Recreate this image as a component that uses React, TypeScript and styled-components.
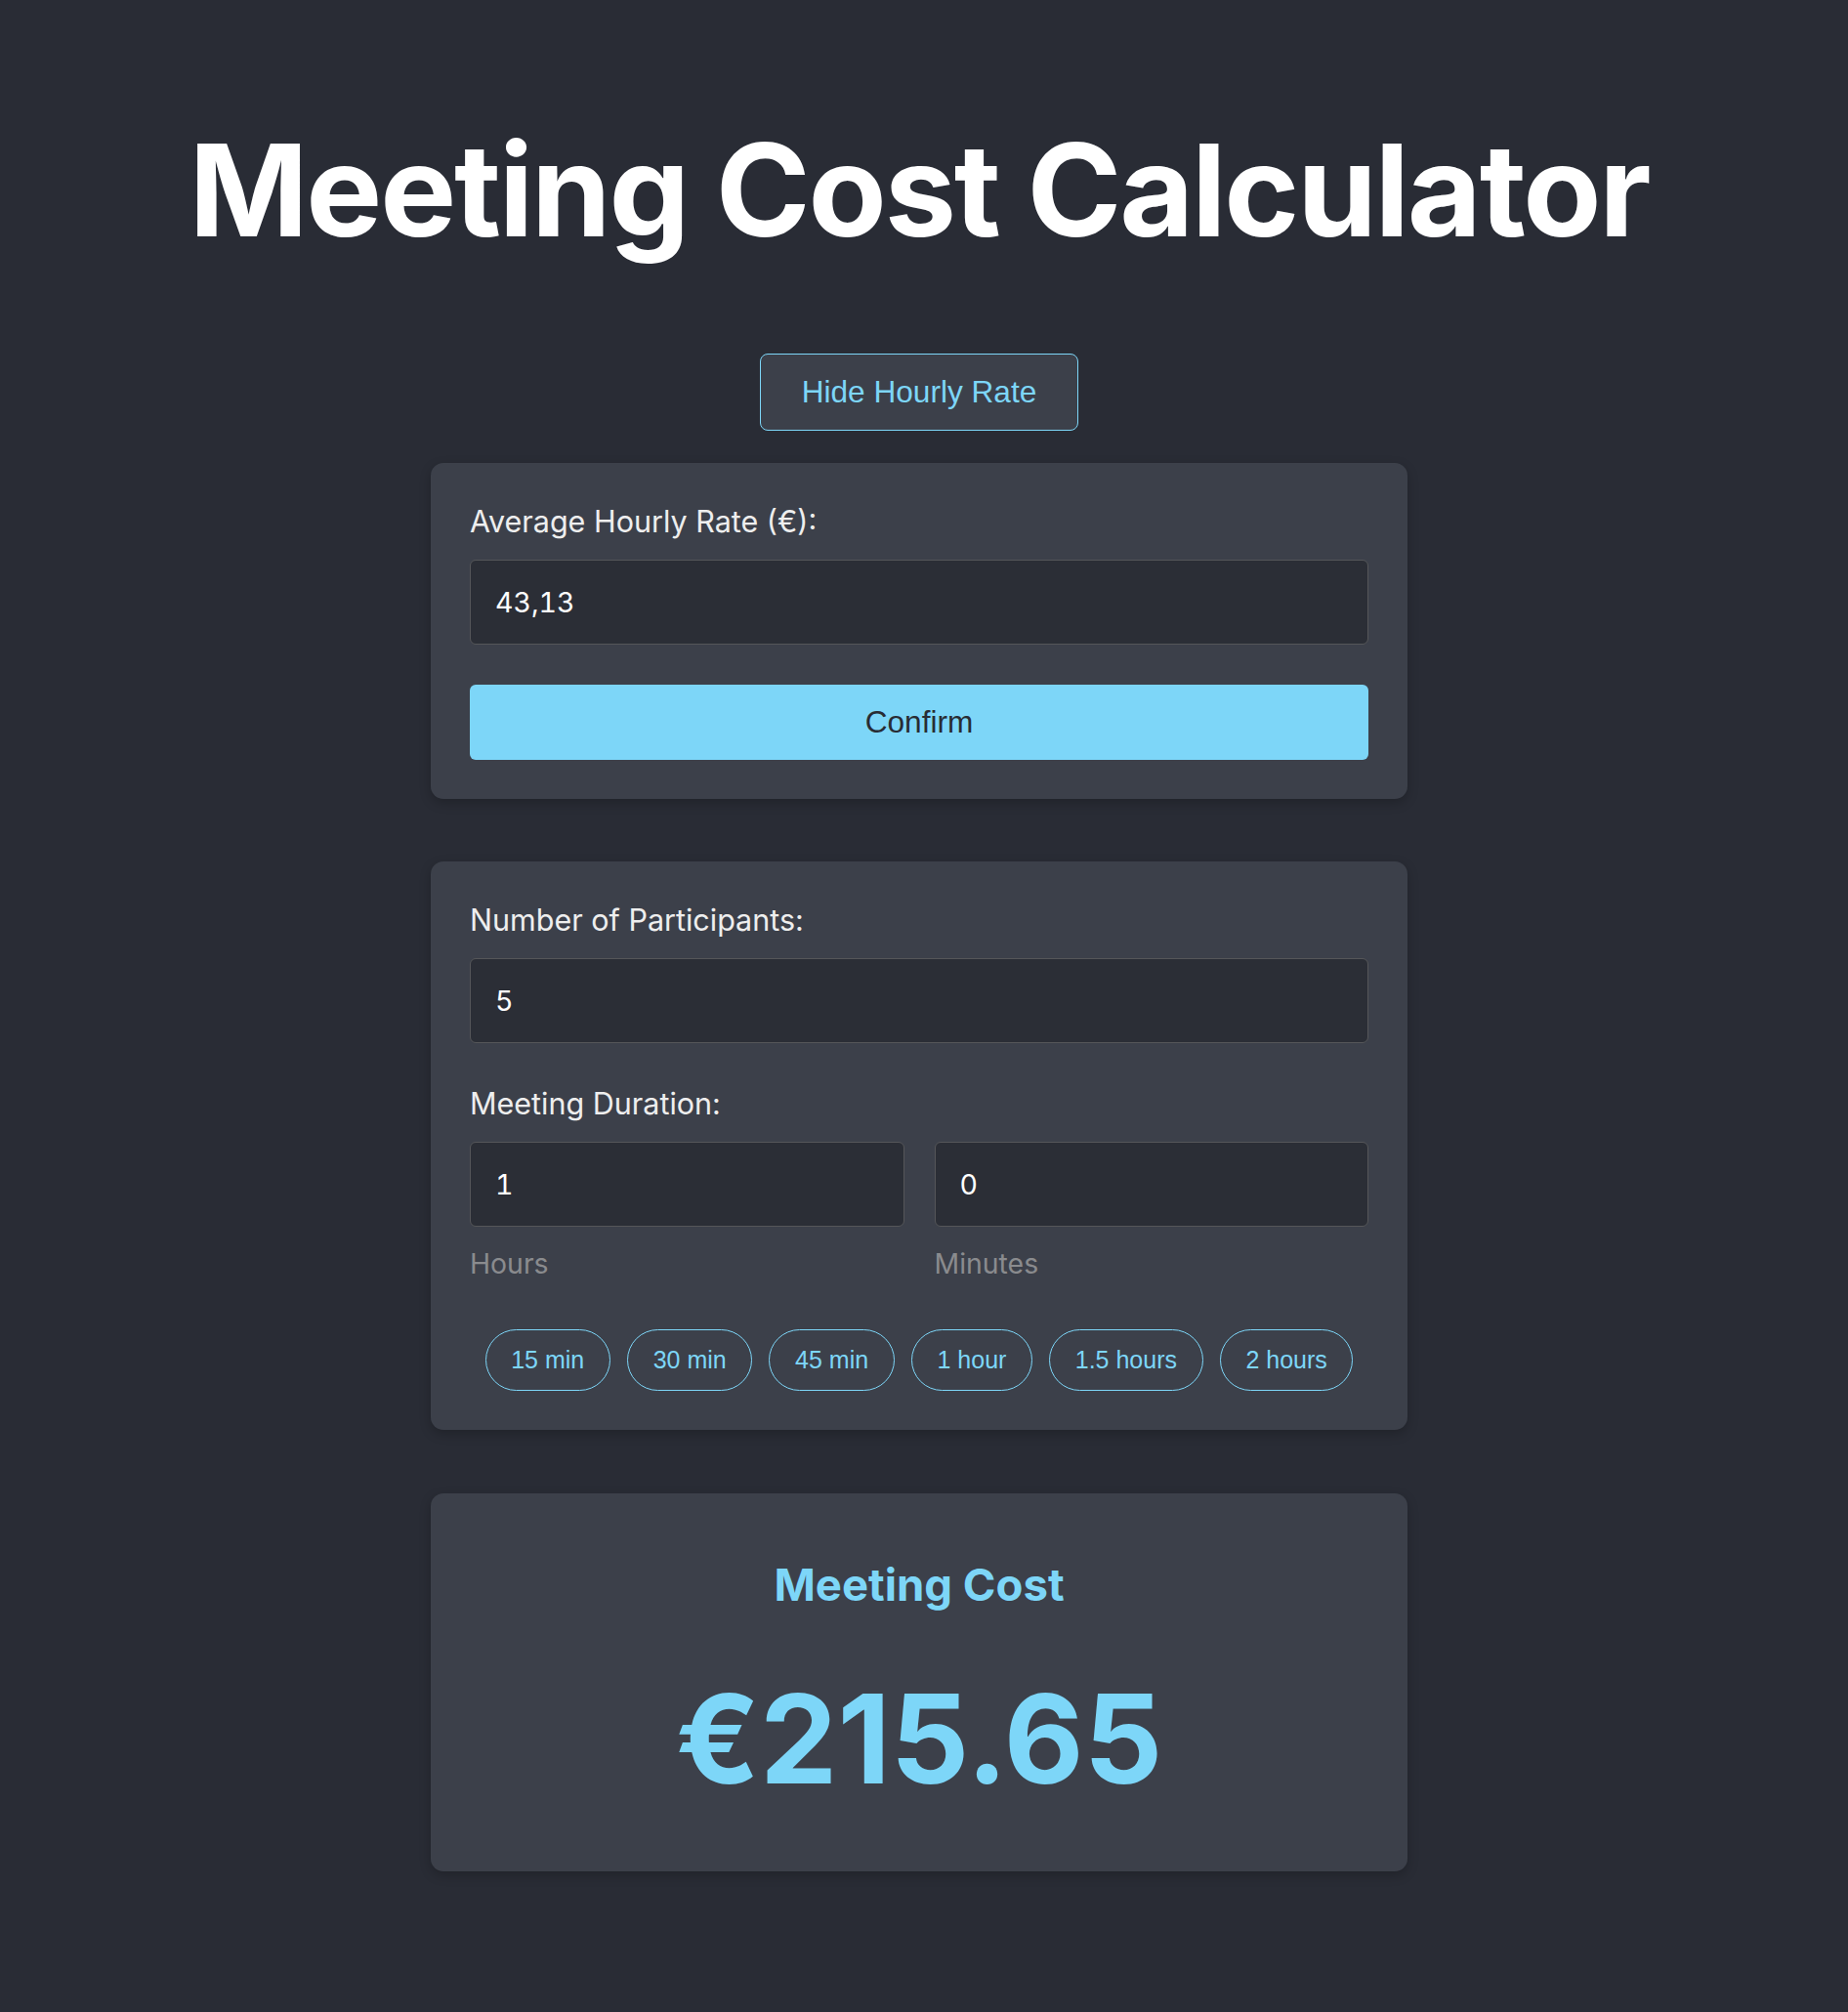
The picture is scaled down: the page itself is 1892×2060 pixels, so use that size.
import React from "react";
import styled, { createGlobalStyle } from "styled-components";

const ACCENT = "#7dd6f8";
const PAGE_BG = "#292c35";
const CARD_BG = "#3c404a";
const FIELD_BG = "#2b2e36";

const GlobalStyle = createGlobalStyle`
  html, body {
    margin: 0;
    padding: 0;
    background: ${PAGE_BG};
  }
  body {
    font-family: Inter, "Noto Sans", sans-serif;
    color: #ececec;
    -webkit-font-smoothing: antialiased;
  }
  * { box-sizing: border-box; }
`;

const Page = styled.main`
  min-height: 2060px;
  display: flex;
  flex-direction: column;
  align-items: center;
  padding: 122px 10px 0 0;
`;

const Title = styled.h1`
  margin: 0;
  font-family: Inter, sans-serif;
  font-weight: 700;
  font-size: 131px;
  line-height: 145px;
  letter-spacing: -2.2px;
  color: #ffffff;
  white-space: nowrap;
`;

const ToggleButton = styled.button`
  margin-top: 95px;
  height: 79px;
  padding: 0 42px;
  background: ${CARD_BG};
  border: 1px solid ${ACCENT};
  border-radius: 8px;
  color: ${ACCENT};
  font-family: "Liberation Sans", Arial, sans-serif;
  font-size: 31.6px;
  cursor: pointer;
`;

const Card = styled.section<{ $gap: number }>`
  width: 1000px;
  margin-top: ${(p) => p.$gap}px;
  padding: 40px;
  background: ${CARD_BG};
  border-radius: 13px;
  box-shadow: 0 4px 12px rgba(0, 0, 0, 0.22);
`;

const ResultCard = styled(Card)`
  text-align: center;
`;

const FieldGroup = styled.div<{ $last?: boolean }>`
  display: flex;
  flex-direction: column;
  margin-bottom: ${(p) => (p.$last ? 0 : 42)}px;
`;

const Label = styled.label`
  display: block;
  font-family: Inter, sans-serif;
  font-size: 30.5px;
  line-height: 40px;
  color: #eeeeee;
  margin-bottom: 19px;
`;

const Field = styled.input`
  width: 100%;
  height: 87px;
  padding: 0 25px;
  background: ${FIELD_BG};
  border: 1px solid #555659;
  border-radius: 6px;
  color: #ffffff;
  font-family: Inter, sans-serif;
  font-size: 28.5px;
  font-variant-numeric: tabular-nums;
  outline: none;
`;

const ConfirmButton = styled.button`
  width: 100%;
  height: 77px;
  margin-top: 41px;
  border: none;
  border-radius: 6px;
  background: ${ACCENT};
  color: #282c34;
  font-family: "Liberation Sans", Arial, sans-serif;
  font-size: 31.6px;
  cursor: pointer;
`;

const DurationGrid = styled.div`
  display: grid;
  grid-template-columns: 1fr 1fr;
  column-gap: 31px;
`;

const DurationCell = styled.div`
  display: flex;
  flex-direction: column;
`;

const Hint = styled.span`
  margin-top: 21px;
  font-family: Inter, sans-serif;
  font-size: 28.4px;
  line-height: 34px;
  color: #8a8b8e;
`;

const PresetRow = styled.div`
  display: flex;
  justify-content: center;
  flex-wrap: wrap;
  gap: 17px;
  margin-top: 50px;
`;

const Preset = styled.button`
  height: 63px;
  padding: 0 25.7px;
  background: transparent;
  border: 1px solid ${ACCENT};
  border-radius: 999px;
  color: ${ACCENT};
  font-family: "Liberation Sans", Arial, sans-serif;
  font-size: 25px;
  cursor: pointer;
`;

const ResultHeading = styled.h2`
  margin: 27px 0 54px;
  font-family: Inter, sans-serif;
  font-weight: 700;
  font-size: 45.5px;
  line-height: 54px;
  color: ${ACCENT};
`;

const Amount = styled.div`
  margin-bottom: 20px;
  font-family: Inter, sans-serif;
  font-weight: 700;
  font-size: 126px;
  line-height: 152px;
  color: ${ACCENT};
`;

const presets = ["15 min", "30 min", "45 min", "1 hour", "1.5 hours", "2 hours"];

export default function App() {
  return (
    <>
      <GlobalStyle />
      <Page>
        <Title>Meeting Cost Calculator</Title>
        <ToggleButton type="button">Hide Hourly Rate</ToggleButton>

        <Card $gap={33}>
          <FieldGroup $last>
            <Label htmlFor="rate">Average Hourly Rate (€):</Label>
            <Field id="rate" type="text" defaultValue="43,13" />
          </FieldGroup>
          <ConfirmButton type="button">Confirm</ConfirmButton>
        </Card>

        <Card $gap={64}>
          <FieldGroup>
            <Label htmlFor="participants">Number of Participants:</Label>
            <Field id="participants" type="text" defaultValue="5" />
          </FieldGroup>
          <FieldGroup $last>
            <Label>Meeting Duration:</Label>
            <DurationGrid>
              <DurationCell>
                <Field type="text" defaultValue="1" aria-label="Hours" />
                <Hint>Hours</Hint>
              </DurationCell>
              <DurationCell>
                <Field type="text" defaultValue="0" aria-label="Minutes" />
                <Hint>Minutes</Hint>
              </DurationCell>
            </DurationGrid>
          </FieldGroup>
          <PresetRow>
            {presets.map((p) => (
              <Preset key={p} type="button">
                {p}
              </Preset>
            ))}
          </PresetRow>
        </Card>

        <ResultCard $gap={65}>
          <ResultHeading>Meeting Cost</ResultHeading>
          <Amount>€215.65</Amount>
        </ResultCard>
      </Page>
    </>
  );
}
